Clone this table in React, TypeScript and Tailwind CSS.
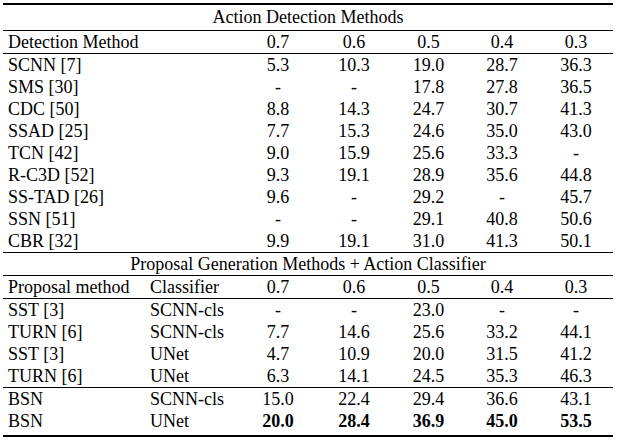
const grid = "grid grid-cols-[140px_97px_76px_76px_73px_74px_74px] h-[22px] leading-[22px]";

const thresholds = ["0.7", "0.6", "0.5", "0.4", "0.3"];

const detection: [string, string[]][] = [
  ["SCNN [7]", ["5.3", "10.3", "19.0", "28.7", "36.3"]],
  ["SMS [30]", ["-", "-", "17.8", "27.8", "36.5"]],
  ["CDC [50]", ["8.8", "14.3", "24.7", "30.7", "41.3"]],
  ["SSAD [25]", ["7.7", "15.3", "24.6", "35.0", "43.0"]],
  ["TCN [42]", ["9.0", "15.9", "25.6", "33.3", "-"]],
  ["R-C3D [52]", ["9.3", "19.1", "28.9", "35.6", "44.8"]],
  ["SS-TAD [26]", ["9.6", "-", "29.2", "-", "45.7"]],
  ["SSN [51]", ["-", "-", "29.1", "40.8", "50.6"]],
  ["CBR [32]", ["9.9", "19.1", "31.0", "41.3", "50.1"]],
];

const proposals: [string, string, string[]][] = [
  ["SST [3]", "SCNN-cls", ["-", "-", "23.0", "-", "-"]],
  ["TURN [6]", "SCNN-cls", ["7.7", "14.6", "25.6", "33.2", "44.1"]],
  ["SST [3]", "UNet", ["4.7", "10.9", "20.0", "31.5", "41.2"]],
  ["TURN [6]", "UNet", ["6.3", "14.1", "24.5", "35.3", "46.3"]],
];

const ours: [string, string, string[], boolean][] = [
  ["BSN", "SCNN-cls", ["15.0", "22.4", "29.4", "36.6", "43.1"], false],
  ["BSN", "UNet", ["20.0", "28.4", "36.9", "45.0", "53.5"], true],
];

function Nums({ values, bold = false }: { values: string[]; bold?: boolean }) {
  return (
    <>
      {values.map((v, i) => (
        <div key={i} className={bold ? "text-center font-bold" : "text-center"}>
          {v}
        </div>
      ))}
    </>
  );
}

export default function App() {
  return (
    <div className="w-[620px] h-[444px] bg-white pt-[3px]">
      <div className="w-[610px] ml-[3px] border-t-2 border-b-2 border-black font-['Liberation_Serif',serif] text-[18px] text-black pb-[3px]">
        {/* Action detection */}
        <div className="h-[26px] flex items-center justify-center border-b border-black">
          Action Detection Methods
        </div>
        <div className={`${grid} border-b border-black box-content`}>
          <div className="col-span-2 pl-[5px]">Detection Method</div>
          <Nums values={thresholds} />
        </div>
        {detection.map(([name, vals], i) => (
          <div
            key={i}
            className={i === detection.length - 1 ? `${grid} border-b border-black box-content` : grid}
          >
            <div className="col-span-2 pl-[5px]">{name}</div>
            <Nums values={vals} />
          </div>
        ))}

        {/* Proposal + classifier */}
        <div className="h-[22px] leading-[22px] text-center border-b border-black box-content">
          Proposal Generation Methods + Action Classifier
        </div>
        <div className={`${grid} border-b border-black box-content`}>
          <div className="pl-[5px]">Proposal method</div>
          <div className="pl-[7px]">Classifier</div>
          <Nums values={thresholds} />
        </div>
        {proposals.map(([name, cls, vals], i) => (
          <div
            key={i}
            className={i === proposals.length - 1 ? `${grid} border-b border-black box-content` : grid}
          >
            <div className="pl-[5px]">{name}</div>
            <div className="pl-[7px]">{cls}</div>
            <Nums values={vals} />
          </div>
        ))}
        {ours.map(([name, cls, vals, bold], i) => (
          <div key={i} className={grid}>
            <div className="pl-[5px]">{name}</div>
            <div className="pl-[7px]">{cls}</div>
            <Nums values={vals} bold={bold} />
          </div>
        ))}
      </div>
    </div>
  );
}
